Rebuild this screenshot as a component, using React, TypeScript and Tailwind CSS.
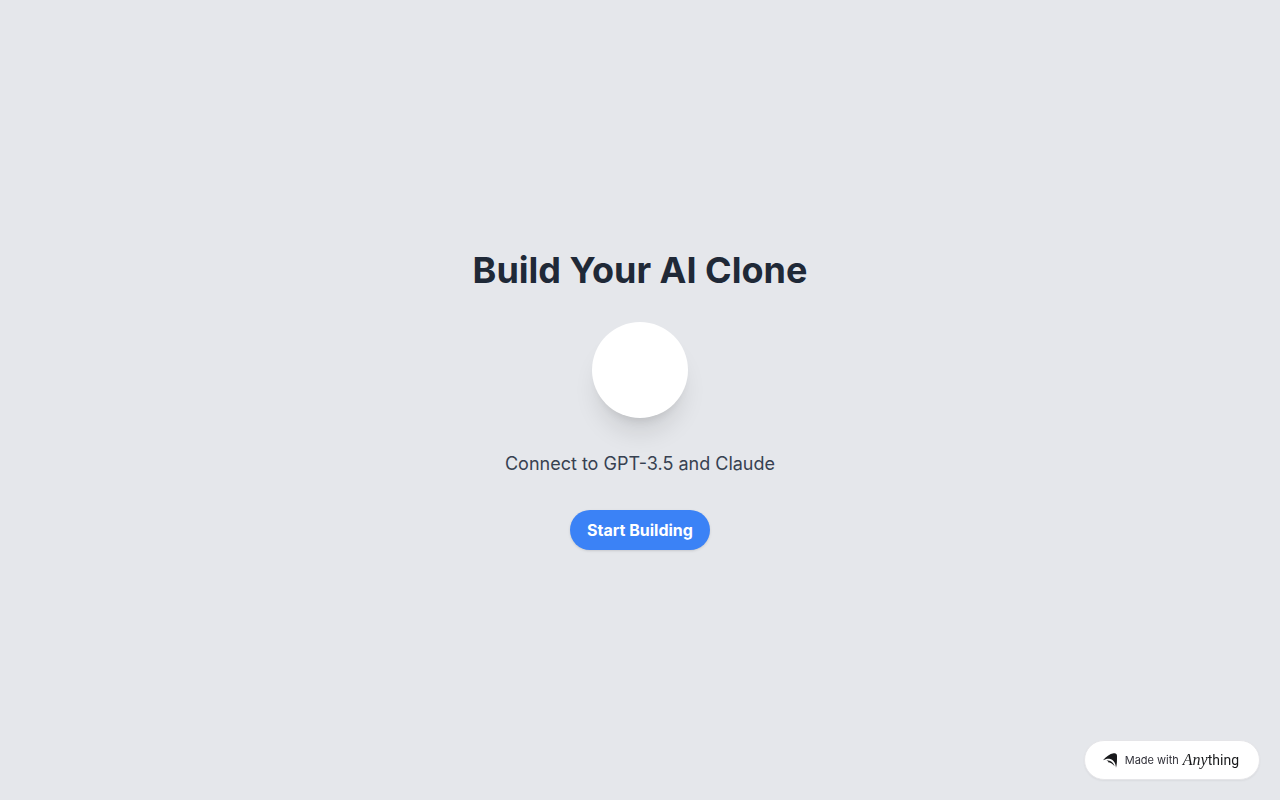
export default function App() {
  return (
    <div className="flex min-h-screen flex-col items-center justify-center bg-[#e5e7eb] font-['Inter',sans-serif]">
      <h1 className="mb-8 text-4xl font-bold text-[#1f2937]">Build Your AI Clone</h1>
      <div className="mb-8 size-24 rounded-full bg-white shadow-xl" />
      <p className="mb-8 text-lg text-[#374151]">Connect to GPT-3.5 and Claude</p>
      <button type="button" className="rounded-full bg-[#3b82f6] px-[17px] py-2 font-bold text-white shadow-sm">
        Start Building
      </button>
      <a
        href="#"
        className="fixed right-5 bottom-5 flex h-10 items-center rounded-full border border-[#e5e5e8] bg-white pr-5 pl-[18px] text-[#18191b] shadow-xs"
      >
        <svg viewBox="0 0 42 45" className="h-[15px] w-[14px]" fill="currentColor" aria-hidden="true">
          <path d="M0 22C9 11 20 3 32 1C38 0 42 2 42 9C42 22 42 34 39 44C38 32 33 21 22 18C14 16 8 18 0 22Z" />
          <path d="M10 23C21 20 30 26 35 40C28 32 22 28 15 28C18 26 15 24 10 23Z" />
        </svg>
        <span className="ml-2 text-[11px] text-[#303038]">Made with</span>
        <span className="ml-1 flex items-baseline">
          <span className="font-['Liberation_Serif',serif] text-[16px] italic">Any</span>
          <span className="font-['Roboto',sans-serif] text-[14px]">thing</span>
        </span>
      </a>
    </div>
  );
}
